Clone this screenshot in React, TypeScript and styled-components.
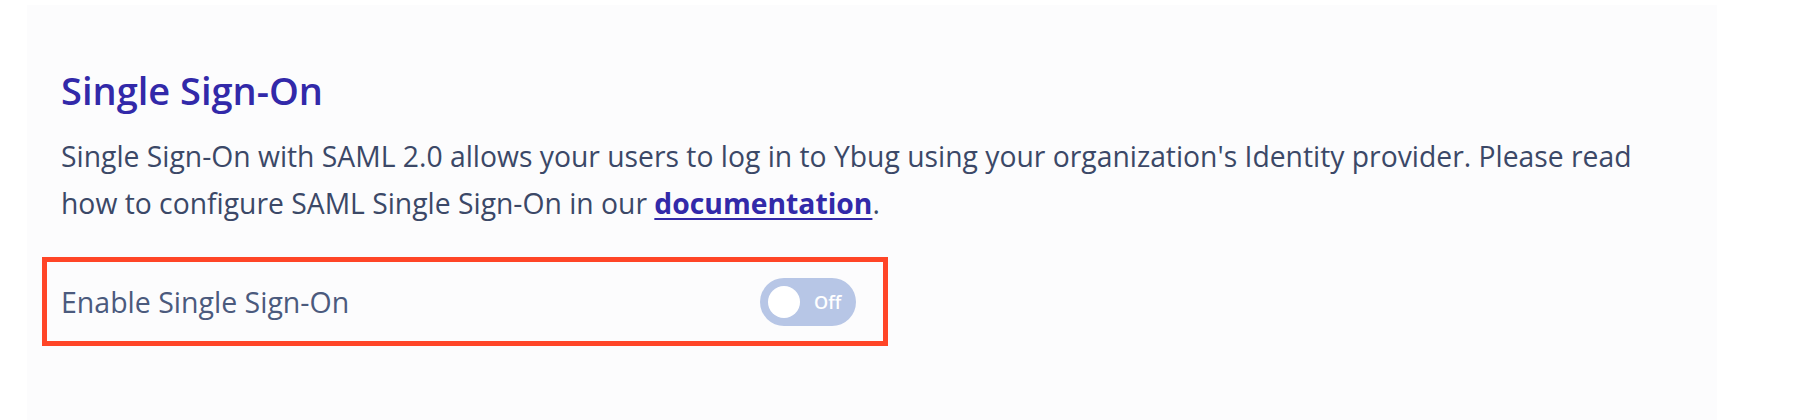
import React, { useState } from 'react';
import styled, { createGlobalStyle } from 'styled-components';

const GlobalStyle = createGlobalStyle`
  html, body {
    margin: 0;
    padding: 0;
    background: #ffffff;
  }
  body {
    font-family: 'Open Sans', 'Noto Sans', sans-serif;
  }
`;

const Panel = styled.section`
  margin: 5px 103px 0 27px;
  padding: 63px 34px 80px 34px;
  background: #fcfcfd;
  min-height: 415px;
  box-sizing: border-box;
`;

const Title = styled.h2`
  margin: 0;
  font-size: 38px;
  line-height: 44px;
  font-weight: 600;
  color: #3229a9;
`;

const Description = styled.p`
  margin: 21px 0 0 0;
  max-width: 1610px;
  font-size: 28.3px;
  line-height: 47px;
  color: #3b4867;
`;

const DocLink = styled.a`
  color: #3229a9;
  font-weight: 700;
  text-decoration: underline;
  text-underline-offset: 4px;
`;

const SettingRow = styled.div`
  margin: 30px 0 0 -19px;
  width: 846px;
  height: 89px;
  box-sizing: border-box;
  border: 5px solid #ff4527;
  padding: 0 27px 0 14px;
  display: flex;
  align-items: center;
  justify-content: space-between;
`;

const Label = styled.span`
  font-size: 28.5px;
  color: #4b5a7d;
`;

const Toggle = styled.button<{ $on: boolean }>`
  width: 96px;
  height: 48px;
  border-radius: 24px;
  border: none;
  padding: 0 8px;
  background: ${(p) => (p.$on ? '#3229a9' : '#b7c6e6')};
  display: flex;
  align-items: center;
  flex-direction: ${(p) => (p.$on ? 'row-reverse' : 'row')};
  gap: 14px;
  cursor: pointer;
  font-family: 'Open Sans', sans-serif;
`;

const Knob = styled.span`
  width: 32px;
  height: 32px;
  border-radius: 50%;
  background: #ffffff;
  flex: none;
`;

const ToggleText = styled.span`
  color: #ffffff;
  font-size: 18px;
  font-weight: 600;
`;

export default function App() {
  const [enabled, setEnabled] = useState(false);

  return (
    <>
      <GlobalStyle />
      <Panel>
        <Title>Single Sign-On</Title>
        <Description>
          Single Sign-On with SAML 2.0 allows your users to log in to Ybug using your organization's Identity
          provider. Please read how to configure SAML Single Sign-On in our{' '}
          <DocLink href="#">documentation</DocLink>.
        </Description>
        <SettingRow>
          <Label>Enable Single Sign-On</Label>
          <Toggle $on={enabled} onClick={() => setEnabled(!enabled)}>
            <Knob />
            <ToggleText>{enabled ? 'On' : 'Off'}</ToggleText>
          </Toggle>
        </SettingRow>
      </Panel>
    </>
  );
}
